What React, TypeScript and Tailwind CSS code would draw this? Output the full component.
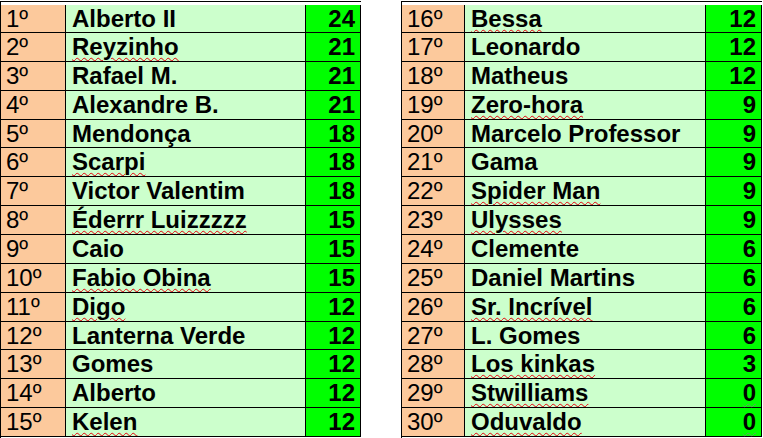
const left = [
  { pos: "1º", name: "Alberto II", pts: 24 },
  { pos: "2º", name: "Reyzinho", pts: 21, typo: true },
  { pos: "3º", name: "Rafael M.", pts: 21 },
  { pos: "4º", name: "Alexandre B.", pts: 21 },
  { pos: "5º", name: "Mendonça", pts: 18 },
  { pos: "6º", name: "Scarpi", pts: 18, typo: true },
  { pos: "7º", name: "Victor Valentim", pts: 18 },
  { pos: "8º", name: "Éderrr Luizzzzz", pts: 15, typo: true },
  { pos: "9º", name: "Caio", pts: 15 },
  { pos: "10º", name: "Fabio Obina", pts: 15, typo: true },
  { pos: "11º", name: "Digo", pts: 12, typo: true },
  { pos: "12º", name: "Lanterna Verde", pts: 12 },
  { pos: "13º", name: "Gomes", pts: 12 },
  { pos: "14º", name: "Alberto", pts: 12 },
  { pos: "15º", name: "Kelen", pts: 12, typo: true },
];

const right = [
  { pos: "16º", name: "Bessa", pts: 12, typo: true },
  { pos: "17º", name: "Leonardo", pts: 12 },
  { pos: "18º", name: "Matheus", pts: 12 },
  { pos: "19º", name: "Zero-hora", pts: 9, typo: true },
  { pos: "20º", name: "Marcelo Professor", pts: 9 },
  { pos: "21º", name: "Gama", pts: 9 },
  { pos: "22º", name: "Spider Man", pts: 9, typo: true },
  { pos: "23º", name: "Ulysses", pts: 9, typo: true },
  { pos: "24º", name: "Clemente", pts: 6 },
  { pos: "25º", name: "Daniel Martins", pts: 6 },
  { pos: "26º", name: "Sr. Incrível", pts: 6, typo: true },
  { pos: "27º", name: "L. Gomes", pts: 6 },
  { pos: "28º", name: "Los kinkas", pts: 3, typo: true },
  { pos: "29º", name: "Stwilliams", pts: 0, typo: true },
  { pos: "30º", name: "Oduvaldo", pts: 0, typo: true },
];

type Row = { pos: string; name: string; pts: number; typo?: boolean };

function Ranking({ rows, posW, ptsW }: { rows: Row[]; posW: string; ptsW: string }) {
  return (
    <div className="w-[361px] border-l border-t border-black">
      {rows.map((r, i) => (
        <div key={r.pos} className={`flex ${i === 0 ? "h-[31px] pt-[3px]" : "h-[28.86px]"}`}>
          <div className={`${posW} flex items-center border-r border-b border-black bg-[#fcc99c] pl-[5px] text-[24px]`}>
            {r.pos}
          </div>
          <div className="flex flex-1 items-center overflow-hidden border-r border-b border-black bg-[#ccffcc] pl-[6px] text-[24px] font-bold">
            <span className={r.typo ? "whitespace-nowrap underline decoration-wavy decoration-red-600 decoration-1 underline-offset-[2px]" : "whitespace-nowrap"}>
              {r.name}
            </span>
          </div>
          <div className={`${ptsW} flex items-center justify-end border-r border-b border-black bg-[#00ff00] pr-[5px] text-[24px] font-bold`}>
            <span className={r.pts === 0 ? "underline decoration-wavy decoration-[#5f9f5f] decoration-1 underline-offset-[2px]" : ""}>
              {r.pts}
            </span>
          </div>
        </div>
      ))}
    </div>
  );
}

export default function App() {
  return (
    <div className="flex h-[438px] w-[763px] gap-[40px] bg-white pt-px font-['Liberation_Sans',Arial,sans-serif] leading-none text-black">
      <Ranking rows={left} posW="w-[65px]" ptsW="w-[55px]" />
      <Ranking rows={right} posW="w-[63px]" ptsW="w-[56px]" />
    </div>
  );
}
